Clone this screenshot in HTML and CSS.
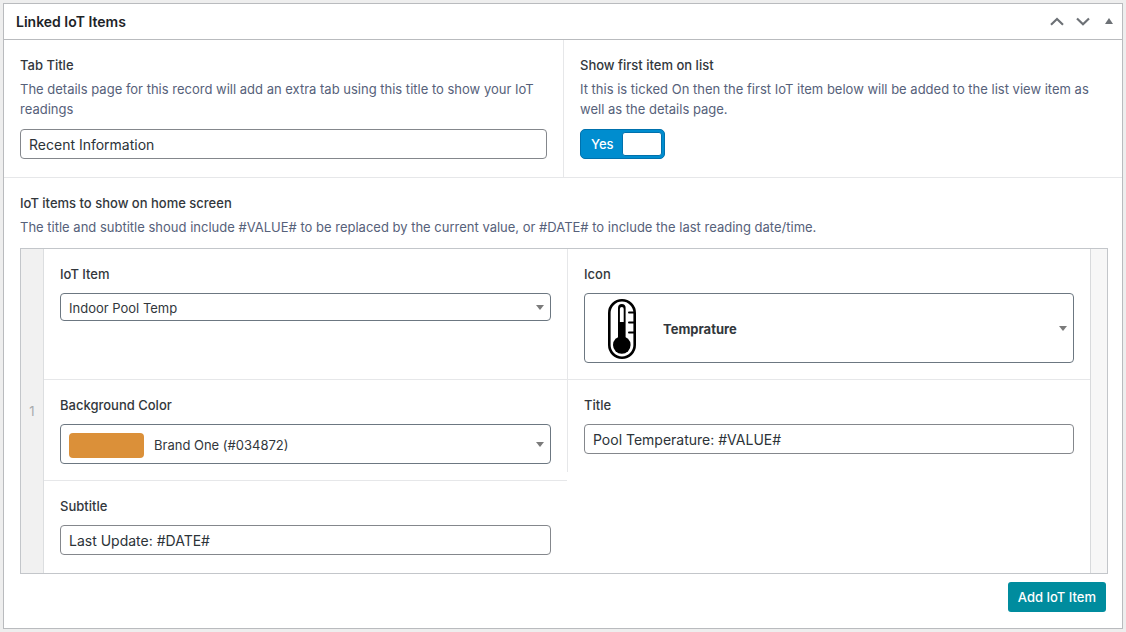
FILE: index.html
```html
<!DOCTYPE html>
<html lang="en">
<head>
<meta charset="utf-8">
<title>Linked IoT Items</title>
<link rel="stylesheet" href="styles.css">
</head>
<body>
<section class="panel">
  <header class="panel-header">
    <h2 class="panel-title">Linked IoT Items</h2>
    <div class="panel-actions">
      <button class="icon-button" type="button" aria-label="Move up"><svg width="14" height="9" viewBox="0 0 14 9"><path d="M1 7.700 7 2l6 5.700" fill="none" stroke="currentColor" stroke-width="2.200"/></svg></button>
      <button class="icon-button" type="button" aria-label="Move down"><svg width="14" height="9" viewBox="0 0 14 9"><path d="M1 1.500 7 7.200l6-5.700" fill="none" stroke="currentColor" stroke-width="2.200"/></svg></button>
      <button class="icon-button" type="button" aria-label="Toggle panel"><svg width="8" height="9" viewBox="0 0 8 9"><path d="M4 1 8 7H0z" fill="currentColor"/></svg></button>
    </div>
  </header>

  <div class="row">
    <div class="field">
      <label class="label" for="tab-title">Tab Title</label>
      <p class="description">The details page for this record will add an extra tab using this title to show your IoT readings</p>
      <input class="text-input" id="tab-title" type="text" value="Recent Information">
    </div>
    <div class="field field-right">
      <label class="label" for="show-first">Show first item on list</label>
      <p class="description">It this is ticked On then the first IoT item below will be added to the list view item as well as the details page.</p>
      <label class="switch"><span class="switch-text">Yes</span><input class="switch-knob" id="show-first" type="checkbox" checked></label>
    </div>
  </div>

  <div class="items">
    <h3 class="label">IoT items to show on home screen</h3>
    <p class="description">The title and subtitle shoud include #VALUE# to be replaced by the current value, or #DATE# to include the last reading date/time.</p>
    <div class="repeater">
      <div class="handle">1</div>
      <div class="fields">
        <div class="row">
          <div class="field">
            <label class="label" for="iot-item">IoT Item</label>
            <div class="picker">
              <select class="select" id="iot-item"><option>Indoor Pool Temp</option></select>
              <svg class="arrow" width="8" height="5" viewBox="0 0 8 5"><path d="M0 0h8L4 5z"/></svg>
            </div>
          </div>
          <div class="field field-right">
            <label class="label" for="icon">Icon</label>
            <div class="picker">
              <select class="select select-icon" id="icon"><option>Temprature</option></select>
              <svg class="thermometer" width="28" height="60" viewBox="0 0 28 60">
                <rect x="1.300" y="1.300" width="25.400" height="57.400" rx="12.700" fill="none" stroke="#000" stroke-width="2.600"/>
                <path d="M21 13.500h5M21 23.500h5M21 33.500h5" stroke="#000" stroke-width="2" stroke-linecap="round"/>
                <circle cx="13.800" cy="46" r="8.800"/>
                <rect x="10" y="5" width="7.600" height="36" rx="3.800"/>
                <path d="M11.900 23V10a1.900 1.900 0 0 1 3.800 0V23z" fill="#fff"/>
              </svg>
              <svg class="arrow" width="8" height="5" viewBox="0 0 8 5"><path d="M0 0h8L4 5z"/></svg>
            </div>
          </div>
        </div>
        <div class="row">
          <div class="field">
            <label class="label" for="background">Background Color</label>
            <div class="picker">
              <select class="select select-color" id="background"><option>Brand One (#034872)</option></select>
              <span class="swatch"></span>
              <svg class="arrow" width="8" height="5" viewBox="0 0 8 5"><path d="M0 0h8L4 5z"/></svg>
            </div>
          </div>
          <div class="field field-right field-short">
            <label class="label" for="title">Title</label>
            <input class="text-input" id="title" type="text" value="Pool Temperature: #VALUE#">
          </div>
          <div class="divider"></div>
        </div>
        <div class="row">
          <div class="field">
            <label class="label" for="subtitle">Subtitle</label>
            <input class="text-input" id="subtitle" type="text" value="Last Update: #DATE#">
          </div>
        </div>
      </div>
      <div class="gutter"></div>
    </div>
    <div class="footer"><button class="add-button" type="button">Add IoT Item</button></div>
  </div>
</section>
</body>
</html>
```
FILE: styles.css
```css
* { box-sizing: border-box; }

body {
  margin: 3px;
  background: #eeeeee;
  color: #2c3338;
  font: 13px/20px Inter, "Liberation Sans", sans-serif;
}

h2, h3, p { margin: 0; }
button, input, select { font-family: inherit; }

.panel {
  background: #fff;
  border: 1px solid #b9bbbe;
  box-shadow: 0 1px 1px rgba(0, 0, 0, 0.04);
}

.panel-header {
  display: flex;
  align-items: center;
  justify-content: space-between;
  height: 36px;
  padding: 0 9px 0 12px;
  border-bottom: 1px solid #b9bbbe;
}

.panel-title { color: #1d2327; font-size: 14px; font-weight: 600; }
.panel-actions { display: flex; gap: 12px; }

.icon-button {
  display: flex;
  padding: 0;
  border: 0;
  background: none;
  color: #6d7176;
}
.icon-button:last-child { margin-left: 3px; }

.row {
  display: grid;
  grid-template-columns: 1fr 1fr;
}
.row + .row, .items { border-top: 1px solid #e6e7e9; }

.field { padding: 16px 16px 18px; }
.field-right { border-left: 1px solid #e6e7e9; }

.label {
  display: block;
  color: #32373c;
  font-size: 13px;
  font-weight: 500;
  line-height: 18px;
}
.label + .text-input, .label + .picker { margin-top: 10px; }

.description {
  margin: 5px 0 10px;
  color: #56617a;
}

.text-input {
  display: block;
  width: 100%;
  height: 30px;
  padding: 0 8px;
  border: 1px solid #84878c;
  border-radius: 4px;
  background: #fff;
  color: #2c3338;
  font-size: 14px;
}

.switch {
  display: inline-flex;
  align-items: center;
  gap: 8px;
  height: 30px;
  padding: 0 2px 0 10px;
  border: 1px solid #0071ad;
  border-radius: 5px;
  background: #008dcf;
  color: #fff;
  font-weight: 500;
  vertical-align: top;
}
.switch-knob {
  width: 40px;
  height: 24px;
  margin: 0;
  border: 1px solid #0071ad;
  border-radius: 3px;
  background: #fff;
  appearance: none;
}

.items { padding: 16px 14px 16px 16px; }

.repeater {
  display: grid;
  grid-template-columns: 23px 1fr 17px;
  margin-top: 11px;
  border: 1px solid #c3c6ca;
}
.handle {
  display: grid;
  place-items: center;
  border-right: 1px solid #dcdee0;
  background: #f1f1f1;
  color: #a7aaad;
}
.gutter {
  border-left: 1px solid #d8dadc;
  background: #f7f7f7;
}

.fields .row + .row:last-child { border-top: 0; }
.fields .field-short { align-self: start; }
.divider { border-top: 1px solid #e6e7e9; }

.picker {
  display: grid;
  align-items: center;
}
.picker > * { grid-area: 1 / 1; }
.picker svg, .swatch { pointer-events: none; }
.field:has(.picker) { padding-bottom: 16px; }

.select {
  width: 100%;
  height: 28px;
  padding: 2px 20px 0 8px;
  border: 1px solid #6c7781;
  border-radius: 4px;
  background: #fff;
  color: #32373c;
  font-size: 13px;
  appearance: none;
}
.select-icon { height: 70px; padding-left: 78px; font-weight: 700; }
.select-color { height: 40px; padding-left: 93px; }

.arrow { justify-self: end; margin-top: 1px; margin-right: 7px; fill: #7b7b7b; }
.thermometer { margin-top: 2px; margin-left: 24px; }
.swatch {
  width: 75px;
  height: 25px;
  margin-top: 2px;
  margin-left: 9px;
  border-radius: 4px;
  background: #db9039;
}

.footer {
  display: flex;
  justify-content: flex-end;
  padding: 8px 2px 0 0;
}
.add-button {
  height: 30px;
  padding: 0 10px;
  border: 0;
  border-radius: 3px;
  background: #008c9e;
  color: #fff;
  font-size: 13px;
  font-weight: 500;
}
```
